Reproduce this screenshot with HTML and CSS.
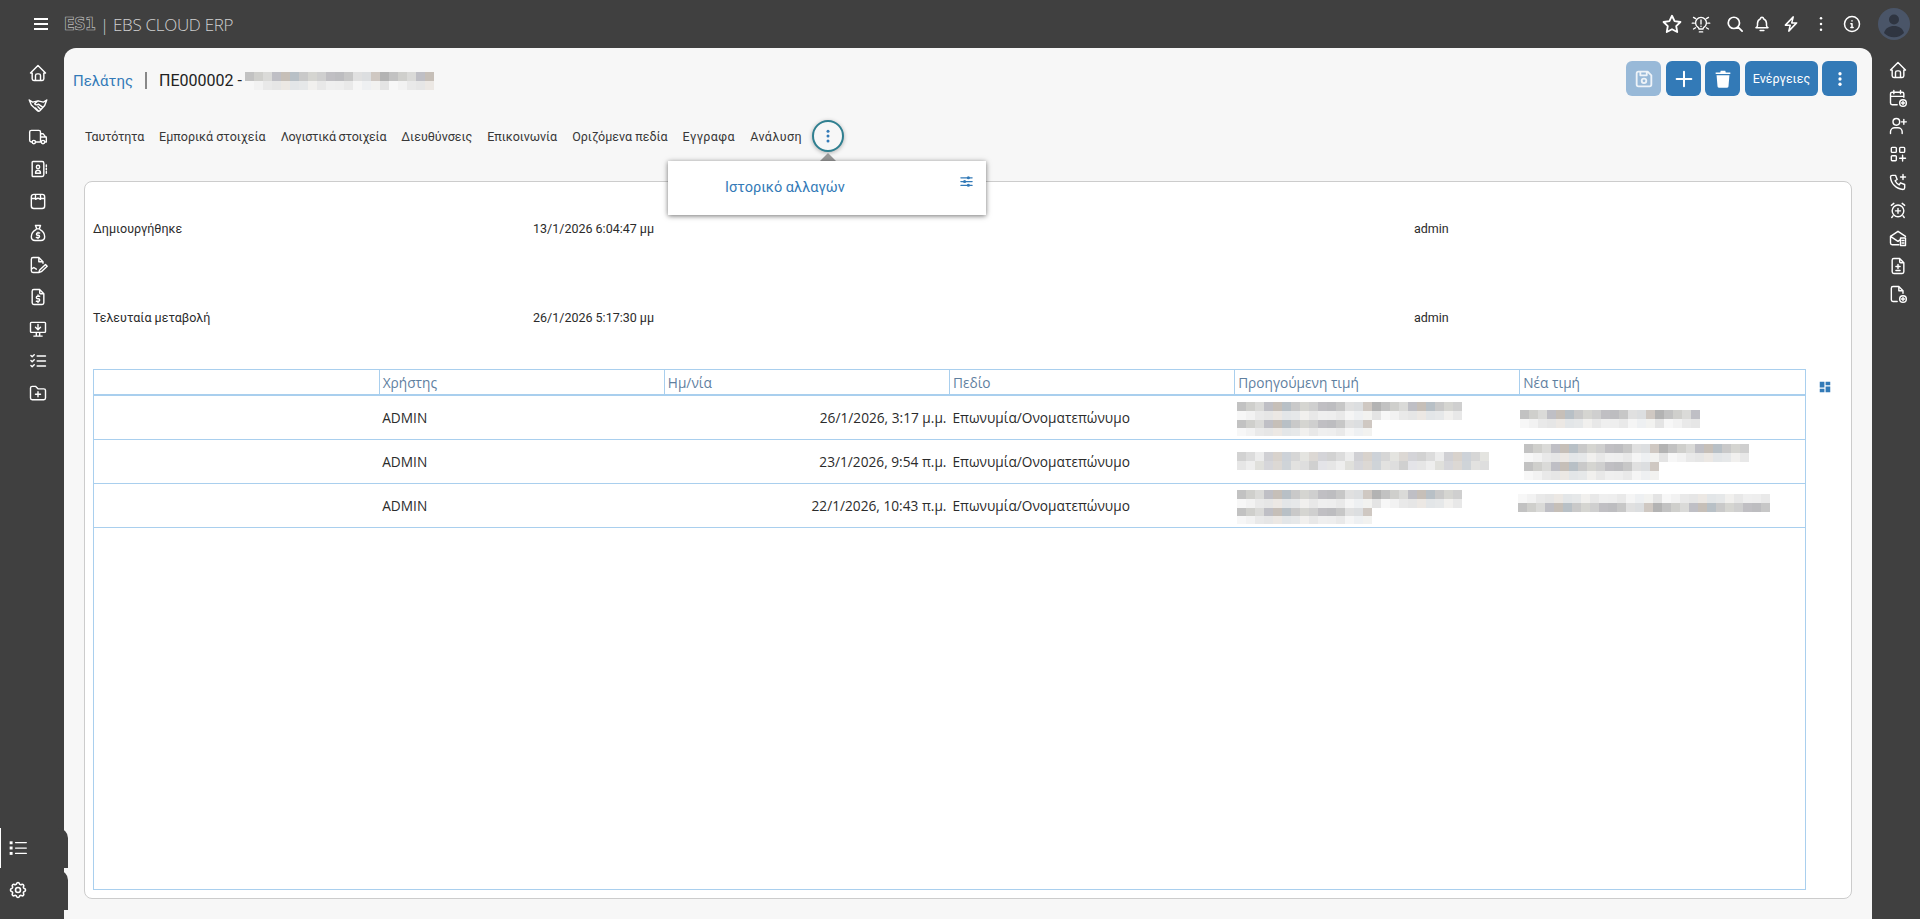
FILE: index.html
```html
<!DOCTYPE html>
<html lang="el">
<head>
<meta charset="utf-8">
<title>EBS CLOUD ERP</title>
<link rel="stylesheet" href="styles.css">
</head>
<body>
<div class="shell">
  <header class="topbar">
    <button class="burger" aria-label="menu"><span></span><span></span><span></span></button>
    <span class="logo">ES1</span>
    <span class="brand">| EBS CLOUD ERP</span>
    <div class="top-actions">
      <svg class="ti star" viewBox="0 0 24 24"><path d="M12 3l2.800 5.900 6.400.9-4.600 4.500 1.100 6.400L12 17.700l-5.700 3 1.100-6.400-4.600-4.500 6.400-.9z"/></svg>
      <svg class="ti bulb" viewBox="0 0 24 24"><path d="M1.500 11h2.500M20 11h2.500M3 4l2.500 1.500M21 4l-2.500 1.500M3 18l2.500-1.500M21 18l-2.500-1.500M8.500 16a6.500 6.500 0 1 1 7 0c-.7.6-1 1.200-1 2h-5c0-.8-.3-1.400-1-2zM10 21.500h4M12 7v5M12 14.500v.5"/></svg>
      <svg class="ti search" viewBox="0 0 24 24"><path d="M10.500 3a7.500 7.500 0 1 0 0 15 7.500 7.500 0 0 0 0-15zM21.500 21.500l-5.700-5.700"/></svg>
      <svg class="ti bell" viewBox="0 0 24 24"><path d="M10 5a2 2 0 1 1 4 0 7 7 0 0 1 4 6v3a4 4 0 0 0 2 3H4a4 4 0 0 0 2-3v-3a7 7 0 0 1 4-6M9.500 20.500h5"/></svg>
      <svg class="ti bolt" viewBox="0 0 24 24"><path d="M15 2.500L4.500 13.500H11L9 21.500l10.500-11H13z"/></svg>
      <svg class="ti dots" viewBox="0 0 24 24"><circle class="fill" cx="12" cy="5" r="1.500"/><circle class="fill" cx="12" cy="12" r="1.500"/><circle class="fill" cx="12" cy="19" r="1.500"/></svg>
      <svg class="ti circle-info" viewBox="0 0 24 24"><circle cx="12" cy="12" r="10"/><path d="M12 7.500v.5M10.500 11.500H12v5M10.500 16.500h3"/></svg>
      <svg class="avatar" viewBox="0 0 32 32"><circle cx="16" cy="16" r="16" fill="#4a5568"/><circle cx="16" cy="11.500" r="5" fill="#2f3541"/><path d="M6 25c1.500-5 5-7 10-7s8.500 2 10 7a14 14 0 0 1-20 0z" fill="#2f3541"/></svg>
    </div>
  </header>

  <nav class="leftbar">
    <div class="left-icons">
      <svg class="ni" viewBox="0 0 24 24"><path d="M5 12H3l9-9 9 9h-2M5 12v7a2 2 0 0 0 2 2h10a2 2 0 0 0 2-2v-7M9 21v-6a2 2 0 0 1 2-2h2a2 2 0 0 1 2 2v6"/></svg>
      <svg class="ni" viewBox="0 0 24 24"><path d="M1.500 6l4 2.500L12 7l6.500 1.500 4-2.500M4 12l7 6.500c1 1 2.500 1 3.500 0L20 12.500M1.500 6L4 12M22.500 6L20 12.500M12 7L8 10.500c1 1.500 3 1.500 4.500.5l5 3.500M9 15.500l3 3M12 14l3 3"/></svg>
      <svg class="ni" viewBox="0 0 24 24"><path d="M5 18H4a2 2 0 0 1-2-2V6a2 2 0 0 1 2-2h9a2 2 0 0 1 2 2v12H9M15 8h3l4 5v5h-2M15 18h1M15 12h7"/><circle cx="7" cy="18" r="2"/><circle cx="18" cy="18" r="2"/></svg>
      <svg class="ni" viewBox="0 0 24 24"><path d="M6 3h11a2 2 0 0 1 2 2v14a2 2 0 0 1-2 2H6a1 1 0 0 1-1-1V4a1 1 0 0 1 1-1zM9 17h6c0-2-1-3.500-3-3.500S9 15 9 17zM22 7v2M22 11v2M22 15v2"/><circle cx="12" cy="9.500" r="2"/></svg>
      <svg class="ni" viewBox="0 0 24 24"><path d="M7 4h10a3 3 0 0 1 3 3v11a3 3 0 0 1-3 3H7a3 3 0 0 1-3-3V7a3 3 0 0 1 3-3zM4 9h5M15 9h5M9 4v6l3-1.500 3 1.500V4"/></svg>
      <svg class="ni" viewBox="0 0 24 24"><path d="M9 3h6l-1.500 4h-3zM10 7h4M9.500 8C6 10 4 13.500 4 16.500 4 19.500 6 21 8.500 21h7c2.500 0 4.500-1.500 4.500-4.500C20 13.500 18 10 14.500 8M14 12h-2.500a1.300 1.300 0 0 0 0 2.700h1a1.300 1.300 0 0 1 0 2.700H10M12 11v1M12 17.500v1"/></svg>
      <svg class="ni" viewBox="0 0 24 24"><path d="M12 21H6a2 2 0 0 1-2-2V5a2 2 0 0 1 2-2h7l5 5v2M13 3v5h5M4 17l3-2 3 2M13 21l1-3 7-6.500 2 2-7 6.500z"/></svg>
      <svg class="ni" viewBox="0 0 24 24"><path d="M14 3v4a1 1 0 0 0 1 1h4M17 21H7a2 2 0 0 1-2-2V5a2 2 0 0 1 2-2h7l5 5v11a2 2 0 0 1-2 2zM14 11h-2.500a1.500 1.500 0 0 0 0 3h1a1.500 1.500 0 0 1 0 3H10M12 17v1.500M12 9.500V11"/></svg>
      <svg class="ni" viewBox="0 0 24 24"><path d="M3 5a1 1 0 0 1 1-1h16a1 1 0 0 1 1 1v10a1 1 0 0 1-1 1H4a1 1 0 0 1-1-1zM7 20.500h10M10 16v4.500M14 16v4.500M12 6.500v6M9 10l3 3 3-3"/></svg>
      <svg class="ni" viewBox="0 0 24 24"><path d="M3.500 5.500L5 7l2.500-2.500M3.500 11.500L5 13l2.500-2.500M3.500 17.500L5 19l2.500-2.500M11 6h10M11 12h10M11 18h10"/></svg>
      <svg class="ni" viewBox="0 0 24 24"><path d="M5 4h4l3 3h7a2 2 0 0 1 2 2v9a2 2 0 0 1-2 2H5a2 2 0 0 1-2-2V6a2 2 0 0 1 2-2zM12 10.500v6M9 13.500h6"/></svg>
    </div>
    <div class="left-tabs">
      <div class="ltab current">
        <svg class="ni" viewBox="0 0 24 24"><path d="M9 5.500h13M9 12h13M9 18.500h13"/><rect class="fill" x="2" y="4" width="3.500" height="3.500"/><rect class="fill" x="2" y="10.250" width="3.500" height="3.500"/><rect class="fill" x="2" y="16.750" width="3.500" height="3.500"/></svg>
      </div>
      <div class="ltab">
        <svg class="ni gear" viewBox="0 0 24 24"><path d="M10.300 4.300c.4-1.700 3-1.700 3.400 0a1.700 1.700 0 0 0 2.600 1.100c1.500-.9 3.300.8 2.400 2.400a1.700 1.700 0 0 0 1 2.500c1.800.4 1.800 3 0 3.400a1.700 1.700 0 0 0-1 2.600c.9 1.500-.9 3.300-2.400 2.400a1.700 1.700 0 0 0-2.600 1c-.4 1.800-3 1.800-3.400 0a1.700 1.700 0 0 0-2.600-1c-1.500.9-3.300-.9-2.400-2.400a1.700 1.700 0 0 0-1-2.600c-1.800-.4-1.800-3 0-3.400a1.700 1.700 0 0 0 1-2.500c-.9-1.600.9-3.300 2.400-2.400 1 .6 2.300.1 2.600-1.100z"/><circle cx="12" cy="12" r="3"/></svg>
      </div>
    </div>
  </nav>

  <main class="panel">
    <div class="page-head">
      <div class="crumbs">
        <a class="crumb">Πελάτης</a>
        <span class="crumb-sep"></span>
        <span class="code">ΠΕ000002 -</span>
        <span class="mosaic m-head"></span>
      </div>
      <div class="head-btns">
        <button class="btn btn-off"><svg class="bi save" viewBox="0 0 24 24"><path d="M6 4h10l4 4v10a2 2 0 0 1-2 2H6a2 2 0 0 1-2-2V6a2 2 0 0 1 2-2zM8 4v4h7V4"/><circle cx="12" cy="14" r="2.500"/></svg></button>
        <button class="btn"><svg class="bi plus" viewBox="0 0 24 24"><path d="M12 4v16M4 12h16"/></svg></button>
        <button class="btn"><svg class="bi trash" viewBox="0 0 24 24"><path class="fill" d="M5 8h14l-1 12a1.500 1.500 0 0 1-1.500 1.500h-9A1.500 1.500 0 0 1 6 20zM4 5h5l.5-2h5l.5 2h5v1.500H4z"/></svg></button>
        <button class="btn btn-text">Ενέργειες</button>
        <button class="btn"><svg class="bi" viewBox="0 0 24 24"><circle class="fill" cx="12" cy="5" r="2.200"/><circle class="fill" cx="12" cy="12" r="2.200"/><circle class="fill" cx="12" cy="19" r="2.200"/></svg></button>
      </div>
    </div>

    <div class="tabs">
      <a class="tab tab-tight">Ταυτότητα</a>
      <a class="tab">Εμπορικά στοιχεία</a>
      <a class="tab tab-tight">Λογιστικά στοιχεία</a>
      <a class="tab">Διευθύνσεις</a>
      <a class="tab">Επικοινωνία</a>
      <a class="tab">Οριζόμενα πεδία</a>
      <a class="tab tab-wide">Εγγραφα</a>
      <a class="tab tab-wide">Ανάλυση</a>
      <div class="more-wrap">
        <button class="more"><svg viewBox="0 0 24 24"><circle cx="12" cy="5.500" r="2"/><circle cx="12" cy="12" r="2"/><circle cx="12" cy="18.500" r="2"/></svg></button>
        <span class="pop-arrow"></span>
        <div class="popover">
          <a class="pop-link">Ιστορικό αλλαγών</a>
          <svg class="pop-icon" viewBox="0 0 24 24"><path d="M3 6h18M3 12h18M3 18h18"/><circle class="fill" cx="15" cy="6" r="2.500"/><circle class="fill" cx="9" cy="12" r="2.500"/><circle class="fill" cx="15" cy="18" r="2.500"/></svg>
        </div>
      </div>
    </div>

    <section class="card">
      <div class="info-block">
        <div class="info-row"><span>Δημιουργήθηκε</span><span>13/1/2026 6:04:47 μμ</span><span>admin</span></div>
        <div class="info-row"><span>Τελευταία μεταβολή</span><span>26/1/2026 5:17:30 μμ</span><span>admin</span></div>
      </div>
      <div class="table-wrap">
        <div class="grid-box">
          <table class="grid">
            <thead>
              <tr><th></th><th>Χρήστης</th><th>Ημ/νία</th><th>Πεδίο</th><th>Προηγούμενη τιμή</th><th>Νέα τιμή</th></tr>
            </thead>
            <tbody>
              <tr>
                <td></td><td>ADMIN</td><td class="num">26/1/2026, 3:17 μ.μ.</td><td>Επωνυμία/Ονοματεπώνυμο</td>
                <td><span class="mosaic m-prev"></span><span class="mosaic m-prev2"></span></td>
                <td><span class="mosaic m-new1"></span></td>
              </tr>
              <tr>
                <td></td><td>ADMIN</td><td class="num">23/1/2026, 9:54 π.μ.</td><td>Επωνυμία/Ονοματεπώνυμο</td>
                <td><span class="mosaic m-long faint"></span></td>
                <td><span class="mosaic m-new2"></span><span class="mosaic m-new2b"></span></td>
              </tr>
              <tr>
                <td></td><td>ADMIN</td><td class="num">22/1/2026, 10:43 π.μ.</td><td>Επωνυμία/Ονοματεπώνυμο</td>
                <td><span class="mosaic m-prev"></span><span class="mosaic m-prev2"></span></td>
                <td><span class="mosaic m-new3 flip"></span></td>
              </tr>
            </tbody>
          </table>
        </div>
        <svg class="grid-icon" viewBox="0 0 24 24"><path class="fill" d="M3 3h8v10H3zM13 3h8v6h-8zM3 15h8v6H3zM13 11h8v10h-8z"/></svg>
      </div>
    </section>
  </main>

  <aside class="rightbar">
    <svg class="ri" viewBox="0 0 24 24"><path d="M5 12H3l9-9 9 9h-2M5 12v7a2 2 0 0 0 2 2h10a2 2 0 0 0 2-2v-7M9 21v-6a2 2 0 0 1 2-2h2a2 2 0 0 1 2 2v6"/></svg>
    <svg class="ri" viewBox="0 0 24 24"><path d="M11 20H5a2 2 0 0 1-2-2V7a2 2 0 0 1 2-2h12a2 2 0 0 1 2 2v4M15 3v4M7 3v4M3 10h16"/><circle cx="18" cy="18" r="4"/><path d="M18 16v4M16 18h4"/></svg>
    <svg class="ri" viewBox="0 0 24 24"><circle cx="10" cy="7" r="4"/><path d="M3 21v-2a5 5 0 0 1 5-5h4a5 5 0 0 1 5 5v2M16 7h6M19 4v6"/></svg>
    <svg class="ri" viewBox="0 0 24 24"><rect x="4" y="4" width="6" height="6" rx="1"/><rect x="4" y="14" width="6" height="6" rx="1"/><rect x="14" y="4" width="6" height="6" rx="1"/><path d="M14 17h7M17.500 13.500v7"/></svg>
    <svg class="ri" viewBox="0 0 24 24"><path d="M5 4h4l2 5-2.500 1.500a11 11 0 0 0 5 5L15 13l5 2v4a2 2 0 0 1-2 2A16 16 0 0 1 3 6a2 2 0 0 1 2-2M15 6h6M18 3v6"/></svg>
    <svg class="ri" viewBox="0 0 24 24"><circle cx="12" cy="13" r="7"/><path d="M7 4L4 6.500M17 4l3 2.500M12 10v6M9 13h6M6 19l-1.500 2M18 19l1.500 2"/></svg>
    <svg class="ri" viewBox="0 0 24 24"><path d="M13 20H5a2 2 0 0 1-2-2V10l9-6 9 6M3 10l9 6 2-1.500M15 12h6v9h-6zM17 15h2M17 18h2"/></svg>
    <svg class="ri" viewBox="0 0 24 24"><path d="M14 3v4a1 1 0 0 0 1 1h4M17 21H7a2 2 0 0 1-2-2V5a2 2 0 0 1 2-2h7l5 5v11a2 2 0 0 1-2 2zM12 10v5M9.500 12.500h5M9.500 17.500h5"/></svg>
    <svg class="ri" viewBox="0 0 24 24"><path d="M13 3v5h5M11 21H6a2 2 0 0 1-2-2V5a2 2 0 0 1 2-2h7l5 5v3"/><circle cx="18" cy="18" r="4"/><path d="M18 16v4M16 18h4"/></svg>
  </aside>
</div>
</body>
</html>
```
FILE: styles.css
```css
* { box-sizing: border-box; }
html, body { margin: 0; height: 100%; }
body {
  background: #404040;
  font-family: Roboto, "Noto Sans", sans-serif;
  color: #2b2b2b;
  overflow: hidden;
}
button { font: inherit; border: 0; padding: 0; background: none; }
svg { display: block; fill: none; stroke-linecap: round; stroke-linejoin: round; }
svg .fill { stroke: none; fill: currentColor; }

.shell {
  display: grid;
  grid-template: 48px 1fr / 64px 1fr 48px;
  grid-template-areas: "top top top" "left main right";
  height: 919px;
  width: 1920px;
}

/* top bar */
.topbar { grid-area: top; display: flex; align-items: center; color: #fff; }
.burger { width: 14px; margin-left: 34px; display: flex; flex-direction: column; gap: 3px; }
.burger span { height: 2px; background: #fff; }
.logo {
  margin-left: 16px; width: 32px; font: 700 17px/1 "DejaVu Sans", sans-serif;
  color: transparent; -webkit-text-stroke: .7px #bcbcbc; letter-spacing: -.5px;
  transform: scaleX(.92); transform-origin: left center;
}
.brand { margin-left: 4px; font: 300 17px/1 "Open Sans", sans-serif; color: #d0d0d0; letter-spacing: -.3px; }
.top-actions { margin-left: auto; display: flex; align-items: center; color: #fff; }
.ti { stroke: currentColor; stroke-width: 2; width: 18px; height: 18px; margin-right: 11px; }
.star { width: 22px; height: 22px; margin-right: 8px; stroke-width: 2; }
.bulb { width: 20px; height: 20px; margin-right: 15px; stroke-width: 1.600; }
.search { margin-right: 9px; stroke-width: 2.300; }
.bolt { stroke-width: 2; }
.dots { width: 20px; height: 20px; margin-right: 12px; }
.circle-info { margin-right: 17px; }
.avatar { width: 32px; height: 32px; margin-right: 10px; }

/* left bar */
.leftbar { grid-area: left; display: flex; flex-direction: column; color: #fff; position: relative; z-index: 2; }
.left-icons { display: flex; flex-direction: column; align-items: center; gap: 12px; padding-top: 15px; width: 76px; }
.ni { width: 20px; height: 20px; stroke: currentColor; stroke-width: 1.700; }
.left-tabs { margin-top: auto; margin-bottom: 9px; display: flex; flex-direction: column; gap: 2px; }
.ltab {
  width: 68px; height: 40px; background: #404040; display: flex; align-items: center;
  padding-left: 8px; border-radius: 0 10px 0 0;
}
.ltab .ni { stroke-width: 1.500; }
.ltab .gear { stroke-width: 1.900; }
.ltab.current { border-left: 1px solid #fff; padding-left: 7px; }

/* main panel */
.panel {
  grid-area: main; background: #f7f7f7; border-radius: 12px 12px 0 0;
  padding: 13px 15px 20px 20px; display: flex; flex-direction: column; min-height: 0;
}
.page-head { display: flex; align-items: center; justify-content: space-between; height: 35px; margin-left: -11px; }
.crumbs { display: flex; align-items: center; padding-top: 4px; }
.crumb { color: #337ab7; font-size: 15px; }
.crumb-sep { width: 2px; height: 17px; background: #888; margin: 0 12px 0 12px; }
.code { font-size: 16px; color: #222; }
.mosaic { display: block; background-repeat: no-repeat; background-size: 100% 9px; background-position: 0 0, 0 9px; height: 18px;
  background-image:
    repeating-linear-gradient(90deg,#c2c2c2 0 9px,#cfcfcc 9px 18px,#dadad8 18px 27px,#bfbfc5 27px 36px,#c6bfb8 36px 45px,#b8c0c6 45px 54px,#c9c9c9 54px 63px,#d5d5d1 63px 72px,#cfcfcf 72px 81px,#c0bfc3 81px 90px,#bdbdc0 90px 99px,#c7c7c7 99px 108px,#e0e0e0 108px 117px,#dcdee0 117px 126px,#cfc8c2 126px 135px,#b3b3b3 135px 144px),
    repeating-linear-gradient(90deg,#f7f7f7 0 9px,#f2f2f2 9px 18px,#e9e9e9 18px 27px,#e6e6e6 27px 36px,#ece8e4 36px 45px,#e3e6e8 45px 54px,#e6e8e9 54px 63px,#f1f0ee 63px 72px,#e8e8e8 72px 81px,#efefef 81px 90px,#eeeeee 90px 99px,#e9e9e9 99px 108px,#f5f5f5 108px 117px,#eef0f2 117px 126px,#f2f2f0 126px 135px,#e4e4e4 135px 144px);
}
.m-head { width: 189px; margin-left: 3px; }
.faint {
  background-image:
    repeating-linear-gradient(90deg,#d2d2d2 0 9px,#dcdcdc 9px 18px,#ececec 18px 27px,#d0d0d4 27px 36px,#d8d2cc 36px 45px,#cdd2d8 45px 54px,#d6d6d6 54px 63px,#e4e4e0 63px 72px,#dcd8d4 72px 81px,#d4d4d8 81px 90px),
    repeating-linear-gradient(90deg,#e6e6e6 0 9px,#eeeeee 9px 18px,#e0e0dc 18px 27px,#d6d6da 27px 36px,#dcd8d4 36px 45px,#cfd4d8 45px 54px,#e2e2e0 54px 63px,#dedede 63px 72px,#d0d0d0 72px 81px,#e4e4e8 81px 90px);
}
.flip { background-position: 0 9px, 0 0; }
.m-prev { width: 225px; margin: 3px 0 0 -1px; }
.m-prev2 { width: 135px; margin-left: -1px; height: 16px; background-size: 100% 8px; background-position: 0 0, 0 8px; }
.m-new1 { width: 180px; margin: 3px 0 0 -3px; }
.m-long { width: 252px; margin-left: -1px; }
.m-new2 { width: 225px; margin: 1px 0 0 1px; }
.m-new2b { width: 135px; margin-left: 1px; }
.m-new3 { width: 252px; margin: 0 0 4px -5px; }

.head-btns { display: flex; gap: 4px; }
.btn {
  width: 35px; height: 35px; background: #337ab7; border-radius: 6px; color: #fff;
  display: flex; align-items: center; justify-content: center;
}
.btn-off { background: #98b9d8; margin-right: 1px; }
.btn-text { width: 73px; font-size: 12.500px; margin-left: 1px; }
.bi { width: 18px; height: 18px; stroke: currentColor; stroke-width: 2; }
.save { width: 22px; height: 22px; color: #eef3f8; }
.plus { width: 22px; height: 22px; stroke-width: 2.200; }
.trash { width: 22px; height: 22px; }

/* tabs */
.tabs { display: flex; align-items: center; gap: 15px; height: 34px; margin-top: 23px; padding-left: 1px; font-size: 12.500px; color: #383838; }
.tab-tight { letter-spacing: -.23px; }
.tab-wide { letter-spacing: .45px; }
.more-wrap { position: relative; margin-left: -5px; }
.more {
  display: block; width: 32px; height: 32px; border-radius: 50%; border: 2px solid #2f7f90; color: #337ab7;
  box-shadow: 0 1px 4px rgba(0,0,0,.3); background: #f7f7f7;
}
.more svg { width: 18px; height: 18px; margin: 5px; fill: currentColor; }
.pop-arrow {
  position: absolute; left: 8px; top: 33px; width: 0; height: 0;
  border: 8px solid transparent; border-top: 0; border-bottom-color: #999;
}
.popover {
  position: absolute; left: -144px; top: 41px; width: 318px; height: 54px; background: #fff;
  box-shadow: 0 1px 5px rgba(0,0,0,.55); z-index: 5; color: #337ab7;
}
.pop-link { position: absolute; left: 57px; top: 18px; font-size: 14.500px; white-space: nowrap; }
.pop-icon { position: absolute; right: 12px; top: 13px; width: 15px; height: 15px; stroke: currentColor; stroke-width: 2; }

/* card */
.card {
  flex: 1; min-height: 0; margin: 28px 5px 0 0; background: #fff; border: 1px solid #ccc; border-radius: 8px;
  padding: 0 8px 8px; display: flex; flex-direction: column; font-size: 13px;
}
.info-block { padding-top: 37px; flex: none; }
.info-row { display: grid; grid-template-columns: 440px 881px 1fr; height: 89px; font-size: 12.500px; line-height: 20px; color: #2b2b2b; }
.info-row:last-child { height: 61px; }
.table-wrap { flex: 1; min-height: 0; display: flex; }
.grid-box { width: 1713px; border: 1px solid #a9cfee; flex: none; }
.grid { width: 100%; border-collapse: collapse; table-layout: fixed; font-family: "Open Sans", "Noto Sans", sans-serif; }
.grid th {
  height: 25px; padding: 0 3px; text-align: left; font-weight: 400; font-size: 13.700px; color: #5f7f9f;
  border-right: 1px solid #a9cfee; border-bottom: 2px solid #a9cfee;
}
.grid th:last-child { border-right: 0; }
.grid td { height: 44px; padding: 0 3px; font-size: 13.700px; color: #2b2b2b; border-bottom: 1px solid #a9cfee; vertical-align: middle; }
.grid td.num { text-align: right; }
.grid-icon { width: 14px; height: 14px; margin: 11px 0 0 12px; color: #337ab7; }

/* right bar */
.rightbar { grid-area: right; display: flex; flex-direction: column; align-items: center; gap: 8px; padding: 12px 0 0 4px; color: #fff; }
.ri { width: 20px; height: 20px; stroke: currentColor; stroke-width: 1.700; }
```
